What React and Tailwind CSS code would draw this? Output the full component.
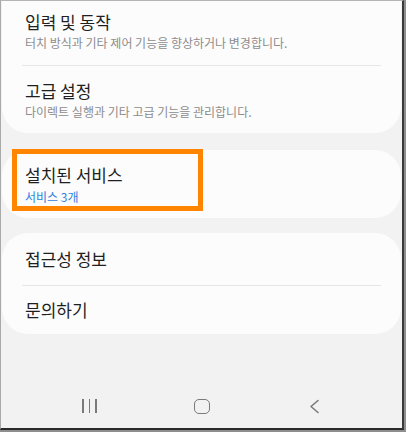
const font = { fontFamily: '"Noto Sans CJK KR", "Noto Sans", sans-serif' };

const Title = ({ children }) => (
  <p className="text-[17px] leading-[22px] text-[#1f1f1f]">{children}</p>
);

const Sub = ({ children, blue }) => (
  <p
    className={
      "text-[12px] leading-[16px] " + (blue ? "text-[#2f80e0]" : "text-[#8c8c8c]")
    }
  >
    {children}
  </p>
);

const Divider = () => <div className="mx-[20px] h-px bg-[#e6e6e6]" />;

export default function App() {
  return (
    <div className="w-[406px] h-[432px] border-r-2 border-b-2 border-[#8e8e8e]" style={font}>
      <div className="h-full flex flex-col bg-[#f2f2f2] border-l border-t border-l-[#a9a9a9] border-t-[#b5b5b5] border-r-[2px] border-b-[2px] border-r-[#3a3a3a] border-b-[#2a2a2a] overflow-hidden">
        <div className="flex flex-col px-px">
          {/* card 1, top scrolled off */}
          <div className="bg-[#fcfcfc] rounded-b-[26px]">
            <div className="px-[23px] pt-[10px] pb-[14px]">
              <Title>입력 및 동작</Title>
              <div className="mt-[2px]">
                <Sub>터치 방식과 기타 제어 기능을 향상하거나 변경합니다.</Sub>
              </div>
            </div>
            <Divider />
            <div className="px-[23px] pt-[14px] pb-[13px]">
              <Title>고급 설정</Title>
              <div className="mt-[2px]">
                <Sub>다이렉트 실행과 기타 고급 기능을 관리합니다.</Sub>
              </div>
            </div>
          </div>

          {/* card 2 */}
          <div className="relative mt-[17px] bg-[#fcfcfc] rounded-[26px] h-[68px] px-[23px] pt-[14px]">
            <Title>설치된 서비스</Title>
            <div className="mt-[3px]">
              <Sub blue>서비스 3개</Sub>
            </div>
            <div className="absolute left-[10px] top-[-1px] w-[191px] h-[62px] border-[5px] border-[#ff8500]" />
          </div>

          {/* card 3 */}
          <div className="mt-[15px] bg-[#fcfcfc] rounded-[26px]">
            <div className="px-[23px] pt-[15px] pb-[15px]">
              <Title>접근성 정보</Title>
            </div>
            <Divider />
            <div className="px-[23px] pt-[13px] pb-[13px]">
              <Title>문의하기</Title>
            </div>
          </div>
        </div>

        {/* nav bar */}
        <div className="mt-auto mb-[12px] flex justify-center items-center h-[20px]">
          <div className="w-[112px] flex justify-center">
            <div className="flex gap-[5px] h-[14px]">
              <div className="w-[1.5px] h-full bg-[#7a7a7a]" />
              <div className="w-[1.5px] h-full bg-[#7a7a7a]" />
              <div className="w-[1.5px] h-full bg-[#7a7a7a]" />
            </div>
          </div>
          <div className="w-[112px] flex justify-center">
            <div className="w-[16px] h-[15px] rounded-[5px] border-[1.8px] border-[#7a7a7a]" />
          </div>
          <div className="w-[112px] flex justify-center">
            <svg width="12" height="15" viewBox="0 0 12 15" fill="none">
              <path d="M10 1.5 L3 7.5 L10 13.5" stroke="#7a7a7a" strokeWidth="1.6" strokeLinecap="round" strokeLinejoin="round" />
            </svg>
          </div>
        </div>
      </div>
    </div>
  );
}
